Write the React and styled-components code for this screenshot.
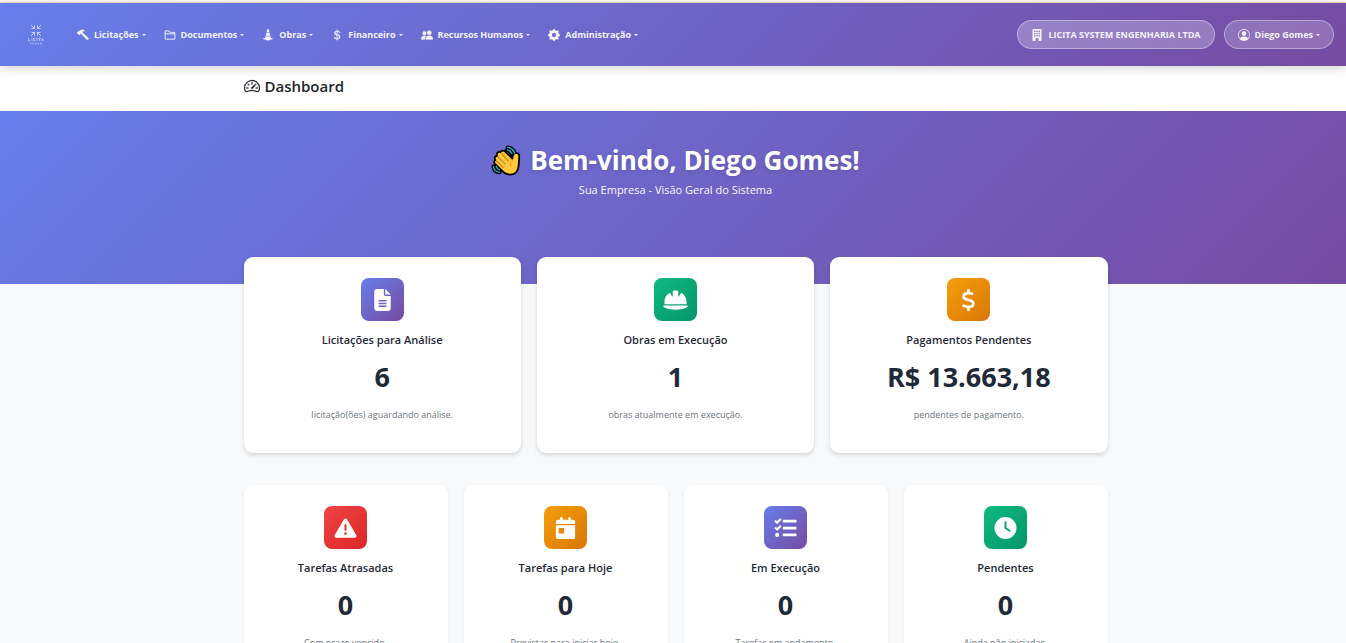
import React from "react";
import styled, { createGlobalStyle, css } from "styled-components";
import {
  BsHammer, BsFolder2, BsConeStriped, BsCurrencyDollar, BsPeopleFill, BsGearFill,
  BsBuildingFill, BsPersonCircle, BsSpeedometer2,
} from "react-icons/bs";
import { FaTasks } from "react-icons/fa";
import {
  FaFileLines, FaHelmetSafety, FaDollarSign, FaTriangleExclamation, FaCalendarDay, FaClock,
} from "react-icons/fa6";

const brand = "linear-gradient(135deg, #667eea 0%, #764ba2 100%)";
const tones = {
  brand,
  green: "linear-gradient(135deg, #10b981, #059669)",
  amber: "linear-gradient(135deg, #f59e0b, #d97706)",
  red: "linear-gradient(135deg, #ef4444, #dc2626)",
};

const GlobalStyle = createGlobalStyle`
  * { box-sizing: border-box; }
  html { scrollbar-width: none; }
  body {
    margin: 0;
    background: #f8f9fb;
    color: #212529;
    font-family: "Segoe UI", "Open Sans", "Noto Sans", sans-serif;
    font-size: 11px;
  }
  h1, h2, h3, p, ul { margin: 0; padding: 0; }
  button { font: inherit; cursor: pointer; }
`;

const TopLine = styled.div`
  height: 3px;
  background: #fdfaf3;
  border-bottom: 1px solid #ecdcc0;
`;

const Navbar = styled.nav`
  position: relative;
  display: flex;
  align-items: center;
  height: 63px;
  padding: 0 12px 0 28px;
  background: ${brand};
  box-shadow: 0 2px 10px rgba(0, 0, 0, 0.18);
`;

const Brand = styled.a`
  display: flex;
  margin-right: 33px;
`;

const Menu = styled.ul`
  display: flex;
  flex: 1;
  gap: 18px;
  list-style: none;
`;

const caret = css`
  &::after {
    content: "";
    margin-left: 3px;
    border: 2px solid transparent;
    border-top-color: currentColor;
    border-bottom: 0;
  }
`;

const MenuButton = styled.button`
  display: flex;
  align-items: center;
  padding: 0;
  border: 0;
  background: none;
  color: #f3f2fd;
  font-size: 9px;
  font-weight: 700;
  line-height: 16px;
  white-space: nowrap;
  svg { width: 12px; height: 12px; margin-right: 5px; stroke: currentColor; stroke-width: 0.3px; }
  ${caret}
`;

const Pill = styled.button`
  display: flex;
  align-items: center;
  height: 29px;
  margin-left: 9px;
  padding: 0 13px;
  border: 1px solid rgba(255, 255, 255, 0.35);
  border-radius: 15px;
  background: rgba(255, 255, 255, ${(p) => (p.$strong ? 0.25 : 0.2)});
  color: #f3f2fd;
  font-size: 9px;
  font-weight: 700;
  white-space: nowrap;
  svg { width: 12px; height: 12px; margin-right: 5px; }
  ${(p) => p.$menu && caret}
`;

const Container = styled.div`
  width: 100%;
  max-width: 864px;
  margin: 0 auto;
`;

const Page = styled.div`
  padding: 0 0 32px 5px;
`;

const PageHeader = styled.header`
  height: 45px;
  padding: 9px 0 0 5px;
  background: #fff;
`;

const PageTitle = styled.h2`
  display: flex;
  align-items: center;
  gap: 5px;
  font-size: 15px;
  font-weight: 600;
  line-height: 22px;
  svg { width: 16px; height: 16px; stroke: currentColor; stroke-width: 0.2px; }
`;

const Hero = styled.section`
  height: 173px;
  padding: 31px 0 0 5px;
  background: ${brand};
  color: #fff;
  text-align: center;
`;

const Welcome = styled.h1`
  display: flex;
  align-items: center;
  justify-content: center;
  gap: 9px;
  font-size: 26px;
  font-weight: 700;
  line-height: 36px;
  text-shadow: 0 2px 4px rgba(0, 0, 0, 0.1);
`;

const Subtitle = styled.p`
  margin-top: 2px;
  font-size: 11px;
  line-height: 20px;
  opacity: 0.95;
`;

const Cards = styled.section`
  display: grid;
  grid-template-columns: repeat(${(p) => p.$columns}, 1fr);
  gap: 16px;
  position: relative;
  margin-top: ${(p) => (p.$raised ? "-27px" : "32px")};
`;

const CardBox = styled.article`
  display: flex;
  flex-direction: column;
  align-items: center;
  min-height: 196px;
  padding: 21px;
  border-radius: 9px;
  background: #fff;
  color: #1f2937;
  text-align: center;
  box-shadow: ${(p) => (p.$raised ? "0 2px 4px rgba(0, 0, 0, 0.15)" : "0 1px 4px rgba(0, 0, 0, 0.05)")};
`;

const Badge = styled.div`
  display: flex;
  align-items: center;
  justify-content: center;
  width: 43px;
  height: 43px;
  border-radius: 8px;
  background: ${(p) => tones[p.$tone]};
  color: #fff;
  svg { width: 25px; height: 22px; }
`;

const CardTitle = styled.h3`
  margin-top: 9px;
  font-size: 11px;
  font-weight: 600;
  line-height: 20px;
`;

const Value = styled.p`
  margin-top: 8px;
  font-size: 27px;
  font-weight: 700;
  line-height: 38px;
`;

const Note = styled.p`
  margin-top: 11px;
  color: #6c757d;
  font-size: 9px;
  line-height: 16px;
`;

function Logo() {
  return (
    <svg width="16" height="22" viewBox="0 0 16 22" fill="none" stroke="#d3d8fa" strokeWidth=".9" aria-label="Licita System">
      <path d="M3 1l3.500 3.500M6.500 1.500v3h-3M13 1L9.500 4.500M9.500 1.500v3h3M3 12l3.500-3.500M3.500 8.500h3v3M13 12L9.500 8.500M12.500 8.500h-3v3" />
      <g strokeWidth=".8" opacity=".85">
        <path d="M.5 14v3h2M4 14v3M7.500 14.400H5.500v2.200h2M9 14v3M10 14.400h3M11.500 14.400V17M13.500 17l1-2.600 1 2.600" />
        <path d="M2 19.500h1.500M4.500 19.500H6M7 19.500h1.500M9.500 19.500H11M12 19.500h2" strokeWidth="1.400" opacity=".7" />
      </g>
    </svg>
  );
}

function WavingHand() {
  return (
    <svg width="30" height="31" viewBox="0 0 31 32" strokeLinecap="round" strokeLinejoin="round" aria-hidden="true">
      <g fill="none" stroke="#000" strokeWidth="4">
        <path d="M17 2.500c4 .3 6.500 2.500 7.500 6M16 5.500c3 .2 5 2 5.500 5M2.500 22c.3 4 2.500 6 6.500 6.300M5.500 22c.5 2 1.500 3.300 4 3.800" />
      </g>
      <path d="M4.500 15.500C3 13 4.500 10.800 6.500 11.500 5 8.800 7.200 6.300 9.800 7.300c.8-1.800 3.400-2 5-.3l7.200 7c.3-3 .8-6 4-6 2.600.2 3.300 2.300 3.200 4.500L28.500 22c-.5 5.300-4 8.500-8.500 8.500-4 0-6.700-1.500-9.200-4.500L4.200 19.500c-1.400-1.500-1-3.300.3-4z" fill="#ffc83d" stroke="#000" strokeWidth="1.800" />
      <path d="M7 12l7.500 7.500M10.500 8.500l7.500 8M5.500 16.500l7 6.500" fill="none" stroke="#c98512" strokeWidth="1.200" />
      <path d="M23 15c-2.500 2-3.500 4-3 7" fill="none" stroke="#e99a1c" strokeWidth="1" />
      <path d="M17 2.500c4 .3 6.500 2.500 7.500 6M17 5.300c2.300.3 3.800 1.500 4.500 3.500M2.500 22c.3 4 2.500 6 6.500 6.300M5.500 22c.5 2 1.500 3 3.500 3.500" fill="none" stroke="#26b7d8" strokeWidth="1.400" />
    </svg>
  );
}

const menu = [
  [BsHammer, "Licitações"],
  [BsFolder2, "Documentos"],
  [BsConeStriped, "Obras"],
  [BsCurrencyDollar, "Financeiro"],
  [BsPeopleFill, "Recursos Humanos"],
  [BsGearFill, "Administração"],
];

const summary = [
  { icon: FaFileLines, tone: "brand", title: "Licitações para Análise", value: "6", note: "licitação(ões) aguardando análise." },
  { icon: FaHelmetSafety, tone: "green", title: "Obras em Execução", value: "1", note: "obras atualmente em execução." },
  { icon: FaDollarSign, tone: "amber", title: "Pagamentos Pendentes", value: "R$ 13.663,18", note: "pendentes de pagamento." },
];

const tasks = [
  { icon: FaTriangleExclamation, tone: "red", title: "Tarefas Atrasadas", value: "0", note: "Com prazo vencido." },
  { icon: FaCalendarDay, tone: "amber", title: "Tarefas para Hoje", value: "0", note: "Previstas para iniciar hoje." },
  { icon: FaTasks, tone: "brand", title: "Em Execução", value: "0", note: "Tarefas em andamento." },
  { icon: FaClock, tone: "green", title: "Pendentes", value: "0", note: "Ainda não iniciadas." },
];

function Card({ icon: Icon, tone, title, value, note, raised }) {
  return (
    <CardBox $raised={raised}>
      <Badge $tone={tone}><Icon /></Badge>
      <CardTitle>{title}</CardTitle>
      <Value>{value}</Value>
      <Note>{note}</Note>
    </CardBox>
  );
}

export default function App() {
  return (
    <>
      <GlobalStyle />
      <TopLine />
      <Navbar>
        <Brand href="#"><Logo /></Brand>
        <Menu>
          {menu.map(([Icon, label]) => (
            <li key={label}><MenuButton><Icon />{label}</MenuButton></li>
          ))}
        </Menu>
        <Pill $strong><BsBuildingFill />LICITA SYSTEM ENGENHARIA LTDA</Pill>
        <Pill $menu><BsPersonCircle />Diego Gomes</Pill>
      </Navbar>
      <PageHeader>
        <Container>
          <PageTitle><BsSpeedometer2 />Dashboard</PageTitle>
        </Container>
      </PageHeader>
      <Hero>
        <Welcome><WavingHand />Bem-vindo, Diego Gomes!</Welcome>
        <Subtitle>Sua Empresa - Visão Geral do Sistema</Subtitle>
      </Hero>
      <Page>
        <Container>
          <Cards $columns={3} $raised>
            {summary.map((c) => <Card key={c.title} {...c} raised />)}
          </Cards>
          <Cards $columns={4}>
            {tasks.map((c) => <Card key={c.title} {...c} />)}
          </Cards>
        </Container>
      </Page>
    </>
  );
}
